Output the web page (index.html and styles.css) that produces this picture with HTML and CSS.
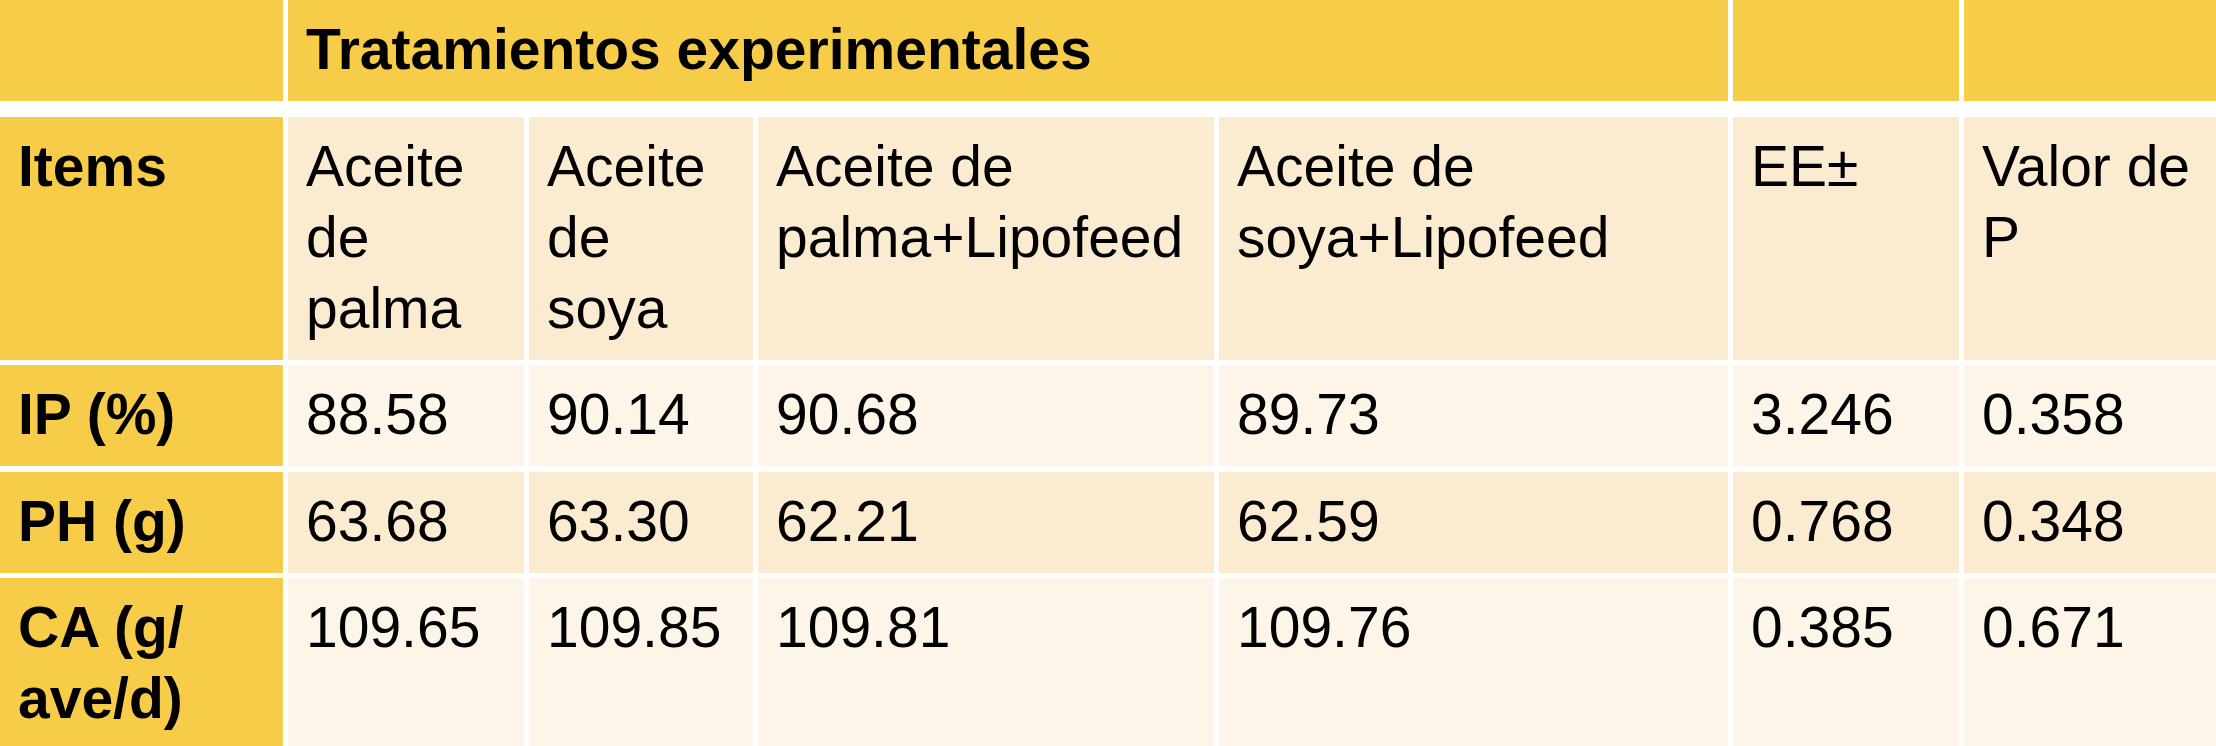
FILE: index.html
```html
<!DOCTYPE html>
<html lang="es">
<head>
<meta charset="utf-8">
<title>Tratamientos experimentales</title>
<link rel="stylesheet" href="styles.css">
</head>
<body>
<div class="table">
  <div class="cell head"></div>
  <div class="cell head span4 bold">Tratamientos experimentales</div>
  <div class="cell head"></div>
  <div class="cell head"></div>

  <div class="cell label">Items</div>
  <div class="cell tone-a">Aceite de palma</div>
  <div class="cell tone-a">Aceite de soya</div>
  <div class="cell tone-a">Aceite de palma+Lipofeed</div>
  <div class="cell tone-a">Aceite de soya+Lipofeed</div>
  <div class="cell tone-a">EE±</div>
  <div class="cell tone-a">Valor de P</div>

  <div class="cell label">IP (%)</div>
  <div class="cell tone-b">88.58</div>
  <div class="cell tone-b">90.14</div>
  <div class="cell tone-b">90.68</div>
  <div class="cell tone-b">89.73</div>
  <div class="cell tone-b">3.246</div>
  <div class="cell tone-b">0.358</div>

  <div class="cell label">PH (g)</div>
  <div class="cell tone-a">63.68</div>
  <div class="cell tone-a">63.30</div>
  <div class="cell tone-a">62.21</div>
  <div class="cell tone-a">62.59</div>
  <div class="cell tone-a">0.768</div>
  <div class="cell tone-a">0.348</div>

  <div class="cell label">CA (g/<wbr>ave/d)</div>
  <div class="cell tone-b">109.65</div>
  <div class="cell tone-b">109.85</div>
  <div class="cell tone-b">109.81</div>
  <div class="cell tone-b">109.76</div>
  <div class="cell tone-b">0.385</div>
  <div class="cell tone-b">0.671</div>
</div>
</body>
</html>
```

FILE: styles.css
```css
html, body {
  margin: 0;
  padding: 0;
  background: #ffffff;
}

body {
  width: 2216px;
  height: 746px;
  overflow: hidden;
  font-family: "Liberation Sans", Arial, sans-serif;
  color: #000000;
}

.table {
  display: grid;
  grid-template-columns: 283px 236px 224px 456px 509px 226px 1fr;
  column-gap: 5px;
  row-gap: 5.5px;
  width: 2216px;
  background: #ffffff;
}

.cell {
  padding: 14px 8px 16px 18px;
  font-size: 57px;
  line-height: 71px;
  min-height: 71px;
}

.head {
  background: #f6cc48;
  margin-bottom: 10px;
}

.span4 {
  grid-column: span 4;
}

.bold {
  font-weight: 700;
}

.label {
  background: #f6cc48;
  font-weight: 700;
}

.tone-a {
  background: #fbebd0;
}

.tone-b {
  background: #fdf5e8;
}
```
